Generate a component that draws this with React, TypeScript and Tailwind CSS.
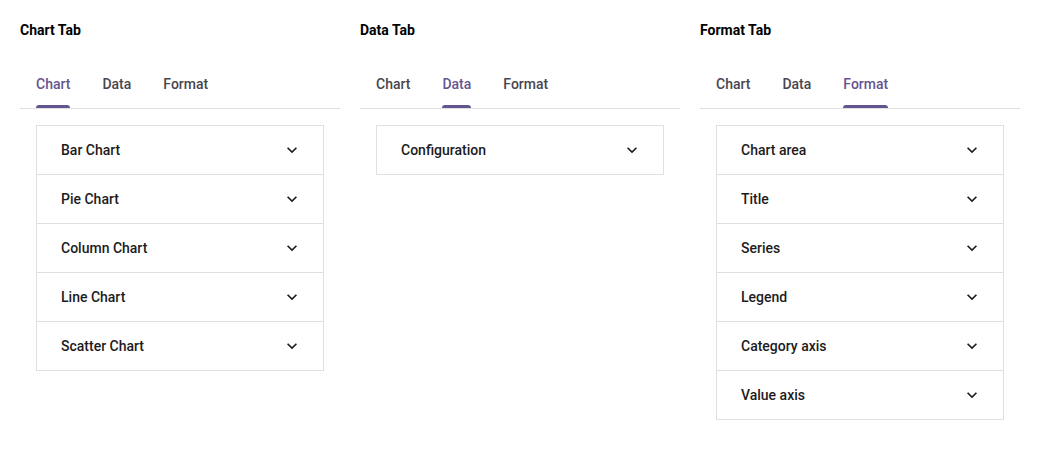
import { useState } from 'react'

const TABS = ['Chart', 'Data', 'Format']

const PANELS: Record<string, string[]> = {
  Chart: ['Bar Chart', 'Pie Chart', 'Column Chart', 'Line Chart', 'Scatter Chart'],
  Data: ['Configuration'],
  Format: ['Chart area', 'Title', 'Series', 'Legend', 'Category axis', 'Value axis'],
}

function Chevron() {
  return (
    <svg width="20" height="20" viewBox="0 0 24 24" className="text-[#1d1b20]">
      <path d="M7.41 8.59 12 13.17l4.59-4.58L18 10l-6 6-6-6z" fill="currentColor" />
    </svg>
  )
}

function TabDemo({ title, initial }: { title: string; initial: string }) {
  const [active, setActive] = useState(initial)
  return (
    <div className="w-[320px]">
      <h3 className="text-sm font-bold text-black h-[22px] leading-[22px] mt-[19px]">{title}</h3>
      <div className="mt-[24px] flex border-b border-[#e0e0e0]">
        {TABS.map((t) => (
          <button
            key={t}
            onClick={() => setActive(t)}
            className={`px-4 h-[43px] flex flex-col items-center justify-end text-sm font-medium ${
              t === active ? 'text-[#65558f]' : 'text-[#49454f]'
            }`}
          >
            <span className="leading-5 mb-[11px]">{t}</span>
            <span className={`h-[3px] w-full rounded-t-[3px] ${t === active ? 'bg-[#65558f]' : 'bg-transparent'}`} />
          </button>
        ))}
      </div>
      <div className="ml-4 mt-4 w-[288px] border border-[#e0e0e0] divide-y divide-[#e0e0e0]">
        {PANELS[active].map((p) => (
          <div key={p} className="box-content h-12 pl-6 pr-[21px] flex items-center justify-between">
            <span className="text-sm font-medium text-[#1d1b20]">{p}</span>
            <Chevron />
          </div>
        ))}
      </div>
    </div>
  )
}

export default function App() {
  return (
    <div className="w-[1040px] h-[456px] bg-white px-5 flex gap-5 font-['Roboto',sans-serif]">
      <TabDemo title="Chart Tab" initial="Chart" />
      <TabDemo title="Data Tab" initial="Data" />
      <TabDemo title="Format Tab" initial="Format" />
    </div>
  )
}
